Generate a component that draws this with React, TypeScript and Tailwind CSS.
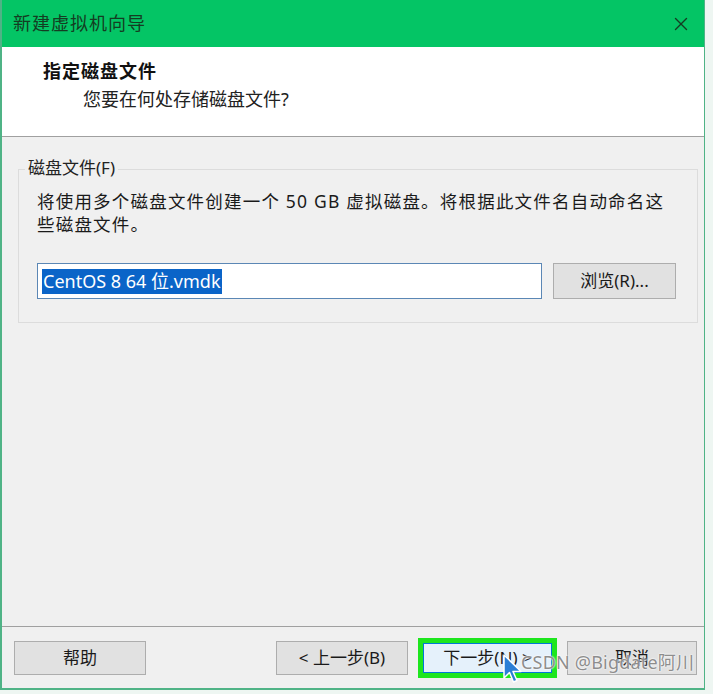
import { X } from 'lucide-react';

const FONT = "font-['Noto_Sans','Noto_Sans_CJK_SC',sans-serif]";

function Btn({ children, className = '' }: { children: React.ReactNode; className?: string }) {
  return (
    <div
      className={`h-[34px] flex items-center justify-center border border-[#adadad] bg-[#e1e1e1] text-[17px] text-[#1a1a1a] ${className}`}>
      {children}
    </div>
  );
}

// windows style arrow cursor, blue variant
function Cursor() {
  return (
    <svg width="20" height="30" viewBox="0 0 20 30" className="absolute left-[503px] top-[654px]">
      <path d="M1 1 L1 24 L6.5 18.5 L10.5 28 L14 26.5 L10 17.5 L18 17.5 Z"
        fill="#2b7fd6" stroke="#ffffff" strokeWidth="1.5" strokeLinejoin="round" />
    </svg>
  );
}

export default function App() {
  return (
    <div className={`relative w-[713px] h-[694px] bg-[#eef6f2] ${FONT}`}>
      <div className="w-[705px] h-[690px] flex flex-col border-l-2 border-r border-b-2 border-[#4fb386] bg-[#f0f0f0]">
        {/* title bar */}
        <div className="h-[47px] shrink-0 bg-[#04c565] flex items-center justify-between pl-[11px] pr-[12px]">
          <span className="text-[18px] text-[#143d22] tracking-[1px]">新建虚拟机向导</span>
          <X size={22} strokeWidth={1.5} color="#143d22" />
        </div>

        {/* header */}
        <div className="h-[90px] shrink-0 bg-white border-b border-[#a0a0a0] pl-[41px] pt-[12px]">
          <div className="text-[18px] font-bold text-[#111] leading-[24px] tracking-[1px]">指定磁盘文件</div>
          <div className="text-[18px] text-[#222] leading-[24px] pl-[40px] mt-[4px]">您要在何处存储磁盘文件?</div>
        </div>

        {/* body */}
        <div className="flex-1 pl-[16px] pr-[6px] pt-[20px]">
          <div className="relative h-[154px] border border-[#dcdcdc] mt-[12px] px-[18px] pt-[20px]">
            <span className="absolute -top-[14px] left-[6px] bg-[#f0f0f0] px-[3px] text-[17px] text-[#222] leading-[24px]">
              磁盘文件(F)
            </span>
            <p className="text-[17.5px] text-[#1a1a1a] leading-[23px] tracking-[1.2px]">
              将使用多个磁盘文件创建一个 50 GB 虚拟磁盘。将根据此文件名自动命名这些磁盘文件。
            </p>
            <div className="flex items-center gap-[11px] mt-[27px]">
              <div className="w-[505px] shrink-0 h-[36px] bg-white border border-[#5b87b5] flex items-center pl-[4px]">
                <span className="bg-[#0a64c8] text-white text-[18px] leading-[25px] px-[1px]">CentOS 8 64 位.vmdk</span>
              </div>
              <Btn className="w-[123px] shrink-0 h-[36px]">浏览(R)...</Btn>
            </div>
          </div>
        </div>

        {/* footer */}
        <div className="h-[62px] shrink-0 border-t border-[#a0a0a0] flex items-start pt-[14px] pl-[12px]">
          <Btn className="w-[132px]">帮助</Btn>
          <Btn className="w-[132px] ml-[130px]">&lt; 上一步(B)</Btn>
          <div className="ml-[10px] -mt-[3px] border-[5px] border-[#1ee61e]">
            <div className="w-[129px] h-[30px] flex items-center justify-center border border-[#0078d7] bg-[#e5f1fb] text-[17px] text-[#1a1a1a]">
              下一步(N) &gt;
            </div>
          </div>
          <Btn className="w-[130px] ml-[10px]">取消</Btn>
        </div>
      </div>

      <span className="absolute left-[521px] top-[649px] text-[18px] text-[#8d8d8d] tracking-[0.2px] [text-shadow:0_0_2px_#fff,0_0_2px_#fff]">
        CSDN @Bigdate阿川
      </span>
      <Cursor />
    </div>
  );
}
